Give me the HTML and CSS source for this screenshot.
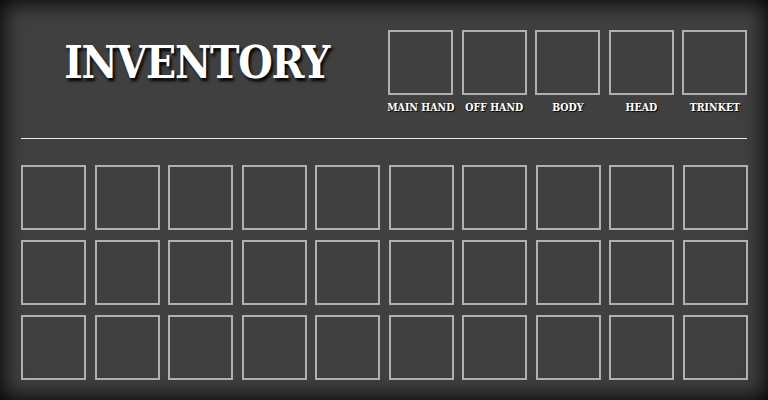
FILE: index.html
```html
<!DOCTYPE html>
<html>
<head>
<meta charset="utf-8">
<link rel="stylesheet" href="styles.css">
</head>
<body>
<div class="panel">
  <div class="header">
    <h1 class="title">INVENTORY</h1>
    <div class="equip"><div class="slot"></div><span class="label">MAIN HAND</span></div>
    <div class="equip"><div class="slot"></div><span class="label">OFF HAND</span></div>
    <div class="equip"><div class="slot"></div><span class="label">BODY</span></div>
    <div class="equip"><div class="slot"></div><span class="label">HEAD</span></div>
    <div class="equip"><div class="slot"></div><span class="label">TRINKET</span></div>
  </div>
  <hr class="divider">
  <div class="grid">
    <div class="slot"></div><div class="slot"></div><div class="slot"></div><div class="slot"></div><div class="slot"></div>
    <div class="slot"></div><div class="slot"></div><div class="slot"></div><div class="slot"></div><div class="slot"></div>
    <div class="slot"></div><div class="slot"></div><div class="slot"></div><div class="slot"></div><div class="slot"></div>
    <div class="slot"></div><div class="slot"></div><div class="slot"></div><div class="slot"></div><div class="slot"></div>
    <div class="slot"></div><div class="slot"></div><div class="slot"></div><div class="slot"></div><div class="slot"></div>
    <div class="slot"></div><div class="slot"></div><div class="slot"></div><div class="slot"></div><div class="slot"></div>
  </div>
</div>
</body>
</html>
```
FILE: styles.css
```css
html, body {
  margin: 0;
  padding: 0;
  background: #000;
}
.panel {
  width: 768px;
  height: 400px;
  box-sizing: border-box;
  background: #404040;
  box-shadow: inset 0 0 22px 2px #000;
  padding: 30px 21px 0 21px;
  font-family: "DejaVu Serif", "Liberation Serif", serif;
  color: #fff;
}
.header {
  display: grid;
  grid-template-columns: repeat(10, 64px);
  justify-content: space-between;
}
.title {
  grid-column: 1 / span 5;
  margin: 0;
  height: 64px;
  display: flex;
  align-items: center;
  justify-content: center;
  font-size: 44px;
  font-weight: bold;
  font-stretch: condensed;
  letter-spacing: -1.2px;
  text-shadow: 2px 3px 3px #000;
  padding-right: 7px;
}
.equip {
  display: flex;
  flex-direction: column;
  align-items: center;
}
.slot {
  width: 65px;
  height: 65px;
  box-sizing: border-box;
  border: 2px solid #b0b0b0;
}
.label {
  margin-top: 6px;
  font-size: 10.5px;
  font-weight: bold;
  font-stretch: condensed;
  white-space: nowrap;
  line-height: 13px;
  text-shadow: 1px 1px 1px #000;
}
.divider {
  margin: 24px 0 0 0;
  border: 0;
  height: 1px;
  background: #e8e8e8;
}
.grid {
  margin-top: 26px;
  display: grid;
  grid-template-columns: repeat(10, 64px);
  justify-content: space-between;
  row-gap: 10px;
}
```
